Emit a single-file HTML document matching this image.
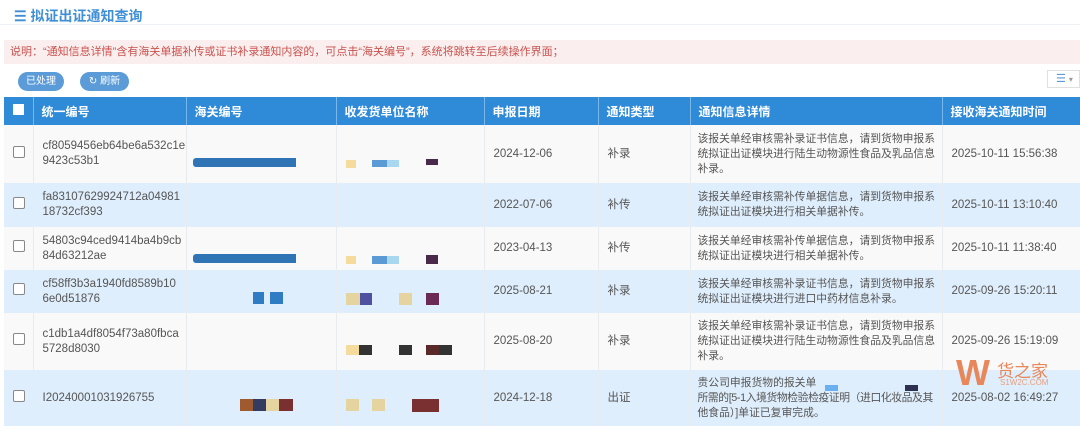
<!DOCTYPE html>
<html><head><meta charset="utf-8"><style>
*{margin:0;padding:0;box-sizing:border-box}
body{width:1080px;height:425px;overflow:hidden;background:#fff;font-family:"Liberation Sans","Noto Sans CJK SC",sans-serif;position:relative;color:#555}
.a{position:absolute}
.title{left:14px;top:6px;font-size:14px;font-weight:bold;color:#3f8fd6}
.tline{left:0;top:24px;width:1080px;height:1px;background:#eef2f6}
.note{left:4px;top:40px;width:1076px;height:24px;background:#fbeeee;color:#c9534f;font-size:11px;line-height:24px;padding-left:6px}
.btn{top:72px;height:19px;border-radius:10px;background:#5b9bd8;color:#fff;font-size:10px;line-height:19px;text-align:center}
table{position:absolute;left:4px;top:97px;border-collapse:collapse;table-layout:fixed;width:1076px;font-size:11.5px}
th{background:#2f8ad8;color:#fff;height:28px;text-align:left;padding-left:8px;font-weight:bold;border-right:1px solid #7ab8ec;font-size:12px}
td{padding-left:9px;border-right:1px solid #e8ecef;vertical-align:middle;color:#555;line-height:15px;overflow:hidden}
tr.w td{background:#f9f9f9}
tr.b td{background:#dfeefc}
td.d{font-size:10.8px;line-height:15px;padding-left:7px;padding-right:0;white-space:nowrap}
.cb{display:inline-block;width:12px;height:12px;border:1px solid #888;border-radius:2px;background:#fff}
.hcb{display:inline-block;width:11px;height:11px;background:#fff}
</style></head><body>
<div class="a title">☰ 拟证出证通知查询</div>
<div class="a tline"></div>
<div class="a note">说明：“通知信息详情”含有海关单据补传或证书补录通知内容的，可点击“海关编号”，系统将跳转至后续操作界面；</div>
<div class="a btn" style="left:18px;width:46px">已处理</div>
<div class="a btn" style="left:80px;width:49px">↻ 刷新</div>
<div class="a" style="left:1047px;top:70px;width:33px;height:18px;border:1px solid #e0e0e0;color:#5b9bd8;font-size:11px;line-height:16px;padding-left:8px">☰ <span style="color:#999;font-size:8px">▾</span></div>
<table>
<colgroup><col style="width:29px"><col style="width:153px"><col style="width:150px"><col style="width:148px"><col style="width:114px"><col style="width:92px"><col style="width:252px"><col style="width:138px"></colgroup>
<tr><th style="padding-left:9px"><span class="hcb"></span></th><th>统一编号</th><th>海关编号</th><th>收发货单位名称</th><th>申报日期</th><th>通知类型</th><th>通知信息详情</th><th>接收海关通知时间</th></tr>
<tr class="w" style="height:58px"><td><span class="cb"></span></td><td>cf8059456eb64be6a532c1e<br>9423c53b1</td><td></td><td></td><td>2024-12-06</td><td>补录</td><td class="d">该报关单经审核需补录证书信息，请到货物申报系<br>统拟证出证模块进行陆生动物源性食品及乳品信息<br>补录。</td><td>2025-10-11 15:56:38</td></tr>
<tr class="b" style="height:44px"><td><span class="cb"></span></td><td>fa83107629924712a04981<br>18732cf393</td><td></td><td></td><td>2022-07-06</td><td>补传</td><td class="d">该报关单经审核需补传单据信息，请到货物申报系<br>统拟证出证模块进行相关单据补传。</td><td>2025-10-11 13:10:40</td></tr>
<tr class="w" style="height:43px"><td><span class="cb"></span></td><td>54803c94ced9414ba4b9cb<br>84d63212ae</td><td></td><td></td><td>2023-04-13</td><td>补传</td><td class="d">该报关单经审核需补传单据信息，请到货物申报系<br>统拟证出证模块进行相关单据补传。</td><td>2025-10-11 11:38:40</td></tr>
<tr class="b" style="height:43px"><td><span class="cb"></span></td><td>cf58ff3b3a1940fd8589b10<br>6e0d51876</td><td></td><td></td><td>2025-08-21</td><td>补录</td><td class="d">该报关单经审核需补录证书信息，请到货物申报系<br>统拟证出证模块进行进口中药材信息补录。</td><td>2025-09-26 15:20:11</td></tr>
<tr class="w" style="height:57px"><td><span class="cb"></span></td><td>c1db1a4df8054f73a80fbca<br>5728d8030</td><td></td><td></td><td>2025-08-20</td><td>补录</td><td class="d">该报关单经审核需补录证书信息，请到货物申报系<br>统拟证出证模块进行陆生动物源性食品及乳品信息<br>补录。</td><td>2025-09-26 15:19:09</td></tr>
<tr class="b" style="height:56px"><td><span class="cb"></span></td><td>I20240001031926755</td><td></td><td></td><td>2024-12-18</td><td>出证</td><td class="d">贵公司申报货物的报关单<br><span style="letter-spacing:-0.4px">所需的[5-1入境货物检验检疫证明（进口化妆品及其</span><br>他食品）]单证已复审完成。</td><td>2025-08-02 16:49:27</td></tr>
</table>
<div class="a" style="left:193px;top:158px;width:103px;height:9px;background:#2f74b5;border-radius:3px 0 0 3px"></div>
<div class="a" style="left:346px;top:160px;width:10px;height:8px;background:#f5dc9c"></div>
<div class="a" style="left:372px;top:160px;width:15px;height:7px;background:#5b9bd5"></div>
<div class="a" style="left:387px;top:160px;width:12px;height:7px;background:#a8d8f0"></div>
<div class="a" style="left:426px;top:159px;width:12px;height:6px;background:#4a2a4a"></div>
<div class="a" style="left:193px;top:254px;width:103px;height:9px;background:#2f74b5;border-radius:3px 0 0 3px"></div>
<div class="a" style="left:346px;top:256px;width:10px;height:8px;background:#f5dc9c"></div>
<div class="a" style="left:372px;top:256px;width:15px;height:8px;background:#5b9bd5"></div>
<div class="a" style="left:387px;top:256px;width:12px;height:8px;background:#a8d8f0"></div>
<div class="a" style="left:426px;top:255px;width:12px;height:9px;background:#4a2a4a"></div>
<div class="a" style="left:253px;top:292px;width:11px;height:12px;background:#2e7cc4"></div>
<div class="a" style="left:270px;top:292px;width:13px;height:12px;background:#2e7cc4"></div>
<div class="a" style="left:346px;top:293px;width:14px;height:12px;background:#e6d4a0"></div>
<div class="a" style="left:360px;top:293px;width:12px;height:12px;background:#5050a0"></div>
<div class="a" style="left:399px;top:293px;width:13px;height:12px;background:#e6d4a0"></div>
<div class="a" style="left:426px;top:293px;width:13px;height:12px;background:#6b2a55"></div>
<div class="a" style="left:346px;top:345px;width:13px;height:10px;background:#f5dc9c"></div>
<div class="a" style="left:359px;top:345px;width:13px;height:10px;background:#333"></div>
<div class="a" style="left:399px;top:345px;width:13px;height:10px;background:#333"></div>
<div class="a" style="left:426px;top:345px;width:13px;height:10px;background:#5a2a2a"></div>
<div class="a" style="left:439px;top:345px;width:13px;height:10px;background:#333"></div>
<div class="a" style="left:240px;top:399px;width:13px;height:12px;background:#a05a30"></div>
<div class="a" style="left:253px;top:399px;width:13px;height:12px;background:#353a60"></div>
<div class="a" style="left:266px;top:399px;width:13px;height:12px;background:#e6d4a0"></div>
<div class="a" style="left:279px;top:399px;width:14px;height:12px;background:#7a3030"></div>
<div class="a" style="left:346px;top:399px;width:13px;height:12px;background:#e6d4a0"></div>
<div class="a" style="left:372px;top:399px;width:13px;height:12px;background:#e6d4a0"></div>
<div class="a" style="left:412px;top:399px;width:27px;height:13px;background:#7a3030"></div>
<div class="a" style="left:825px;top:385px;width:13px;height:6px;background:#6ab0f0"></div>
<div class="a" style="left:905px;top:385px;width:13px;height:6px;background:#2e3050"></div>
<div class="a" style="left:956px;top:352px;font-size:36px;font-weight:bold;color:#e8885a">W</div>
<div class="a" style="left:997px;top:357px;font-size:17px;color:#e8885a">货之家</div>
<div class="a" style="left:1000px;top:378px;font-size:8px;color:#e8a080">S1W2C.COM</div>
</body></html>
